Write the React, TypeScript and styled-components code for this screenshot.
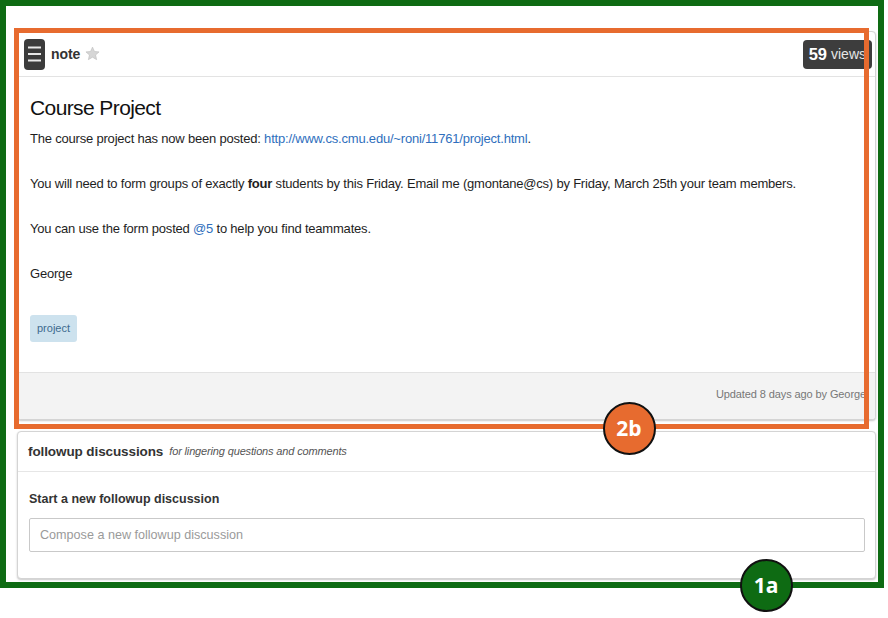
import styled, { createGlobalStyle } from "styled-components";

const sans = `"Liberation Sans", Arial, Helvetica, sans-serif`;

const GlobalStyle = createGlobalStyle`
  html, body {
    margin: 0;
    padding: 0;
    background: #ffffff;
  }
  body {
    font-family: ${sans};
    color: #333;
  }
`;

const Page = styled.div`
  position: relative;
  width: 888px;
  height: 618px;
  overflow: hidden;
`;

const Frame = styled.div`
  box-sizing: border-box;
  width: 884px;
  height: 588px;
  border: 6px solid #0e6b13;
  padding: 25px 2px 0 11px;
  display: flex;
  flex-direction: column;
  gap: 11px;
`;

const Card = styled.div`
  background: #fff;
  border: 1px solid #d4d4d4;
  border-radius: 4px;
  box-shadow: 0 1px 2px rgba(0, 0, 0, 0.22);
  overflow: hidden;
`;

const NoteHeader = styled.div`
  height: 44px;
  display: flex;
  align-items: center;
  padding: 0 3px 0 6px;
  border-bottom: 1px solid #e3e3e3;
  svg {
    flex-shrink: 0;
  }
`;

const NoteType = styled.span`
  margin-left: 6px;
  font-weight: bold;
  font-size: 14px;
  letter-spacing: -0.1px;
  color: #333;
`;

const StarBtn = styled.span`
  display: inline-flex;
  margin-left: 5px;
  margin-top: -2px;
`;

const Views = styled.div`
  margin-left: auto;
  height: 29px;
  padding: 0 6px;
  display: flex;
  align-items: center;
  gap: 4px;
  background: #3d3d3d;
  border-radius: 4px;
  color: #e6e6e6;
  font-size: 14px;
  b {
    color: #fff;
    font-size: 16.5px;
  }
`;

const NoteBody = styled.div`
  padding: 18px 12px 30px 12px;
`;

const Title = styled.h1`
  margin: 0 0 7px;
  font-size: 21px;
  line-height: 26px;
  letter-spacing: -0.6px;
  font-weight: normal;
  color: #111;
`;

const Text = styled.div`
  font-size: 13px;
  line-height: 22.5px;
  letter-spacing: -0.2px;
  color: #1e1e1e;
  a {
    color: #2f6fbd;
    text-decoration: none;
  }
`;

const Tag = styled.span`
  display: inline-flex;
  align-items: center;
  margin-top: 29px;
  height: 27px;
  padding: 0 7px;
  border-radius: 3px;
  background: #cde2ee;
  color: #3d6b8e;
  font-size: 11px;
`;

const NoteFooter = styled.div`
  height: 43px;
  display: flex;
  align-items: center;
  justify-content: flex-end;
  padding: 0 9px 3px 0;
  background: #f3f3f3;
  border-top: 1px solid #e2e2e2;
  color: #777;
  font-size: 11px;
  letter-spacing: -0.1px;
`;

const FollowHeader = styled.div`
  height: 39px;
  display: flex;
  align-items: center;
  gap: 6px;
  padding: 0 10px;
  border-bottom: 1px solid #e6e6e6;
  b {
    font-size: 13.5px;
    letter-spacing: -0.1px;
    color: #333;
  }
  i {
    font-size: 11px;
    letter-spacing: -0.15px;
    color: #555;
  }
`;

const FollowBody = styled.div`
  padding: 17px 10px 26px 11px;
`;

const Label = styled.div`
  font-weight: bold;
  font-size: 12.5px;
  line-height: 20px;
  color: #333;
  margin-bottom: 9px;
`;

const Compose = styled.input`
  box-sizing: border-box;
  display: block;
  width: 100%;
  height: 34px;
  padding: 0 10px;
  border: 1px solid #c9c9c9;
  border-radius: 2px;
  font-family: ${sans};
  font-size: 12.6px;
  color: #333;
  outline: none;
  &::placeholder {
    color: #9a9a9a;
  }
`;

const Highlight = styled.div`
  position: absolute;
  left: 14px;
  top: 28px;
  width: 855px;
  height: 401px;
  box-sizing: border-box;
  border: 5px solid #e76b2f;
  pointer-events: none;
`;

const Marker = styled.div<{ $x: number; $y: number; $bg: string }>`
  position: absolute;
  left: ${(p) => p.$x - 26.5}px;
  top: ${(p) => p.$y - 26.5}px;
  width: 53px;
  height: 53px;
  box-sizing: border-box;
  border-radius: 50%;
  border: 2px solid #111;
  background: ${(p) => p.$bg};
  color: #fff;
  display: flex;
  align-items: center;
  justify-content: center;
  font-family: "Open Sans", "Liberation Sans", sans-serif;
  font-weight: bold;
  font-size: 21px;
`;

const ListIcon = () => (
  <svg width="21" height="31" viewBox="0 0 21 31">
    <rect x="0" y="0" width="21" height="31" rx="4" fill="#3b3b3b" />
    <path d="M4 8.5h13M4 15h13M4 21.5h13" stroke="#e8e8e8" strokeWidth="2" />
  </svg>
);

const Star = () => (
  <svg width="15" height="15" viewBox="0 0 24 24">
    <path
      d="M12 1.8l3.1 6.9 7.4.7-5.6 5 1.7 7.4L12 17.9l-6.6 3.9 1.7-7.4-5.6-5 7.4-.7z"
      fill="#d6d6d6"
      stroke="#bdbdbd"
      strokeWidth="1"
    />
  </svg>
);

export default function App() {
  return (
    <Page>
      <GlobalStyle />
      <Frame>
        <Card>
          <NoteHeader>
            <ListIcon />
            <NoteType>note</NoteType>
            <StarBtn>
              <Star />
            </StarBtn>
            <Views>
              <b>59</b> views
            </Views>
          </NoteHeader>
          <NoteBody>
            <Title>Course Project</Title>
            <Text>
              The course project has now been posted:{" "}
              <a href="#">http://www.cs.cmu.edu/~roni/11761/project.html</a>.
              <br />
              <br />
              You will need to form groups of exactly <b>four</b> students by this Friday. Email me
              (gmontane@cs) by Friday, March 25th your team members.
              <br />
              <br />
              You can use the form posted <a href="#">@5</a> to help you find teammates.
              <br />
              <br />
              George
            </Text>
            <Tag>project</Tag>
          </NoteBody>
          <NoteFooter>Updated 8 days ago by George</NoteFooter>
        </Card>
        <Card>
          <FollowHeader>
            <b>followup discussions</b>
            <i>for lingering questions and comments</i>
          </FollowHeader>
          <FollowBody>
            <Label>Start a new followup discussion</Label>
            <Compose placeholder="Compose a new followup discussion" />
          </FollowBody>
        </Card>
      </Frame>
      <Highlight />
      <Marker $x={629} $y={428} $bg="#e76b2f">2b</Marker>
      <Marker $x={766} $y={585} $bg="#0e6b13">1a</Marker>
    </Page>
  );
}
